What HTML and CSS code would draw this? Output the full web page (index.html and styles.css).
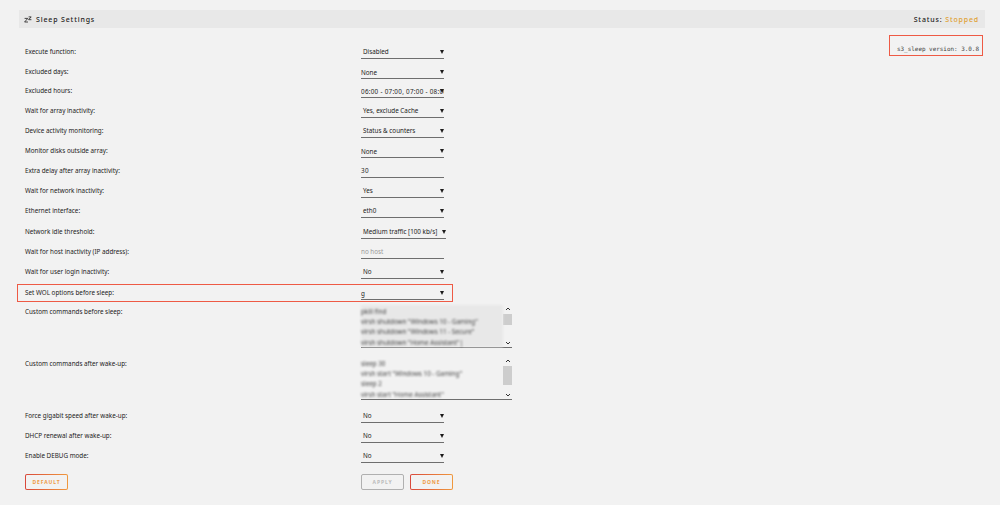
FILE: index.html
```
<!DOCTYPE html>
<html lang="en">
<head>
    <meta charset="UTF-8">
    <title>Sleep Settings</title>
    <link rel="stylesheet" href="styles.css">
</head>
<body>

<div class="title">
    <span class="left">
        <svg class="icon" viewBox="0 0 8 7"><path d="M0.6 2.4H3.8L0.6 6H4M4.6 0.9H7.2L4.6 3.7H7.4"/></svg>
        Sleep Settings
    </span>
    <span class="status">Status: <span class="stopped">Stopped</span></span>
</div>

<div class="version">s3_sleep version: 3.0.8</div>

<form class="settings">
    <div class="row"><label>Execute function:</label><div class="field select">Disabled</div></div>
    <div class="row"><label>Excluded days:</label><div class="field select multi">None</div></div>
    <div class="row short"><label>Excluded hours:</label><div class="field select multi hours">06:00 - 07:00, 07:00 - 08:00</div></div>
    <div class="row"><label>Wait for array inactivity:</label><div class="field select">Yes, exclude Cache</div></div>
    <div class="row"><label>Device activity monitoring:</label><div class="field select">Status &amp; counters</div></div>
    <div class="row"><label>Monitor disks outside array:</label><div class="field select multi">None</div></div>
    <div class="row"><label>Extra delay after array inactivity:</label><div class="field number">30</div></div>
    <div class="row"><label>Wait for network inactivity:</label><div class="field select">Yes</div></div>
    <div class="row"><label>Ethernet interface:</label><div class="field select">eth0</div></div>
    <div class="row tall"><label>Network idle threshold:</label><div class="field select wide">Medium traffic [100 kb/s]</div></div>
    <div class="row"><label>Wait for host inactivity (IP address):</label><div class="field placeholder">no host</div></div>
    <div class="row"><label>Wait for user login inactivity:</label><div class="field select">No</div></div>
    <div class="row marked"><label>Set WOL options before sleep:</label><div class="field select multi">g</div></div>
    <div class="row area-row">
        <label>Custom commands before sleep:</label>
        <div class="area hover">
            <div class="commands">pkill find<br>virsh shutdown "Windows 10 - Gaming"<br>virsh shutdown "Windows 11 - Secure"<br>virsh shutdown "Home Assistant"|</div>
            <div class="scrollbar">
                <svg viewBox="0 0 6 4"><path d="M1 3L3 1L5 3"/></svg>
                <span class="thumb"></span>
                <svg viewBox="0 0 6 4"><path d="M1 1L3 3L5 1"/></svg>
            </div>
        </div>
    </div>
    <div class="row area-row second">
        <label>Custom commands after wake-up:</label>
        <div class="area">
            <div class="commands">sleep 30<br>virsh start "Windows 10 - Gaming"<br>sleep 2<br>virsh start "Home Assistant"</div>
            <div class="scrollbar">
                <svg viewBox="0 0 6 4"><path d="M1 3L3 1L5 3"/></svg>
                <span class="thumb long"></span>
                <svg viewBox="0 0 6 4"><path d="M1 1L3 3L5 1"/></svg>
            </div>
        </div>
    </div>
    <div class="row after-area"><label>Force gigabit speed after wake-up:</label><div class="field select">No</div></div>
    <div class="row"><label>DHCP renewal after wake-up:</label><div class="field select">No</div></div>
    <div class="row"><label>Enable DEBUG mode:</label><div class="field select">No</div></div>
    <div class="buttons">
        <div><button type="button">Default</button></div>
        <div class="group">
            <button type="button" disabled>Apply</button>
            <button type="button">Done</button>
        </div>
    </div>
</form>

</body>
</html>
```
FILE: styles.css
```
* { box-sizing: border-box; }
body {
    margin: 0;
    padding: 10px 15px 0 19px;
    height: 505px;
    overflow: hidden;
    background: #f2f2f2;
    color: #1c1b1b;
    font-family: "Noto Sans", sans-serif;
    font-size: 6.3px;
}
.title {
    display: flex;
    justify-content: space-between;
    align-items: center;
    height: 18px;
    padding: 0 6px 0 5px;
    background: #e8e8e8;
    font-size: 7px;
    font-weight: 500;
    letter-spacing: 0.85px;
}
.left { display: flex; align-items: center; gap: 4px; }
.icon { width: 8px; height: 7px; fill: none; stroke: #1c1b1b; stroke-width: 0.8; }
.stopped { color: #e0a030; }
.version {
    width: 94px;
    height: 21px;
    margin: 7px 2px -17px auto;
    padding-right: 3px;
    border: 1px solid #ee5a45;
    color: #444;
    font: 5.93px/25px "DejaVu Sans Mono", monospace;
    text-align: right;
    white-space: nowrap;
}
.row {
    display: grid;
    grid-template-columns: 336px 83px;
    align-items: end;
    height: 20px;
    padding-left: 6px;
}
.row.short { height: 19px; }
.row.tall { height: 21px; }
label { height: 13px; line-height: 11px; white-space: nowrap; }
.field {
    display: flex;
    height: 13px;
    border-bottom: 1px solid #6e6e6e;
    line-height: 11px;
    white-space: nowrap;
}
.select { padding-left: 2px; position: relative; }
.select::after {
    content: "";
    position: absolute;
    right: 0;
    top: 4px;
    border: 0 solid transparent;
    border-width: 4px 2px 0;
    border-top-color: #1c1b1b;
}
.multi { padding-left: 0; line-height: 13px; overflow: hidden; }
.hours { letter-spacing: 0.28px; }
.number { letter-spacing: 0.3px; }
.wide { width: 85px; }
.placeholder { color: #999; }
.row.marked {
    width: 434px;
    height: 16px;
    margin: 6px 0 0 -1px;
    padding: 0 0 1px 7px;
    outline: 1px solid #ee5a45;
}
.area-row {
    grid-template-columns: 336px 151px;
    align-items: start;
    height: 43px;
    margin-top: 4px;
}
.area-row.second { margin-top: 9px; }
.area-row label { line-height: 13px; }
.area {
    display: flex;
    justify-content: space-between;
    height: 43px;
    border-bottom: 1px solid #6e6e6e;
}
.area.hover .commands { background: #e8e8e8; }
.commands {
    width: 142px;
    padding-top: 2px;
    color: #444;
    line-height: 10.2px;
    white-space: nowrap;
    filter: blur(0.9px);
}
.scrollbar {
    display: flex;
    flex-direction: column;
    align-items: center;
    width: 9px;
    padding: 2px 0;
}
.scrollbar svg { width: 6px; height: 4px; fill: none; stroke: #333; }
.thumb { width: 9px; height: 11px; margin: 3px 0 auto; background: #cdcdcd; }
.thumb.long { height: 19px; }
.after-area { height: 23px; }
.buttons {
    display: grid;
    grid-template-columns: 336px 1fr;
    padding: 11px 0 0 6px;
}
.group { display: flex; gap: 6px; }
button {
    display: block;
    width: 43px;
    height: 16px;
    padding: 0;
    border: 1px solid transparent;
    border-radius: 2px;
    background: linear-gradient(#f2f2f2, #f2f2f2) padding-box, linear-gradient(90deg, #d9483b, #f0993e) border-box;
    color: #ee9a45;
    font: bold 5px "Noto Sans", sans-serif;
    letter-spacing: 0.9px;
    text-transform: uppercase;
}
button:disabled {
    background: #f2f2f2;
    border-color: #b0b0b0;
    color: #bbb;
}
```
